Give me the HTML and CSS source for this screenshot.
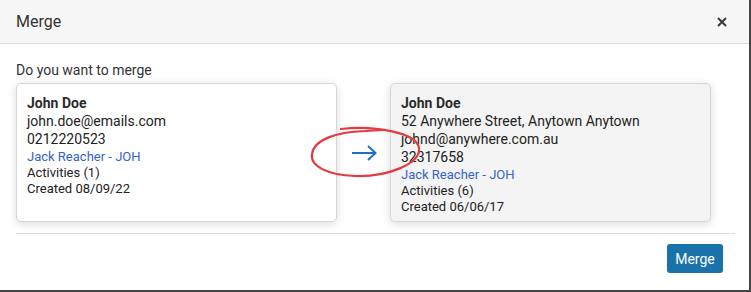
FILE: index.html
```html
<!DOCTYPE html>
<html lang="en">
<head>
  <meta charset="UTF-8" />
  <title>Merge</title>
  <meta name="viewport" content="width=device-width, initial-scale=1.0" />
  <link rel="stylesheet" href="styles.css">
</head>
<body>

  <div class="dialog">
    <div class="dialog-header">
      <h3>Merge</h3>
      <button class="btn-close" aria-label="Close">
        <svg width="10" height="10" viewBox="0 0 10 10">
          <path d="M1 1 L9 9 M9 1 L1 9" stroke="#3a3a3a" stroke-width="2" />
        </svg>
      </button>
    </div>

    <div class="dialog-body">
      <p class="question">Do you want to merge</p>

      <div class="merge-row">
        <div class="card">
          <div class="name">John Doe</div>
          <div class="big">john.doe@emails.com</div>
          <div class="big">0212220523</div>
          <div class="link">Jack Reacher - JOH</div>
          <div class="small">Activities (1)</div>
          <div class="small">Created 08/09/22</div>
        </div>

        <div class="arrow">
          <svg width="26" height="16" viewBox="0 0 26 16">
            <path d="M1 8 H24.5 M17 1 L24.5 8 L17 15" fill="none" stroke="#1f6fc8" stroke-width="2" />
          </svg>
        </div>

        <div class="card card-target">
          <div class="name">John Doe</div>
          <div class="big">52 Anywhere Street, Anytown Anytown</div>
          <div class="big">johnd@anywhere.com.au</div>
          <div class="big">32317658</div>
          <div class="link">Jack Reacher - JOH</div>
          <div class="small">Activities (6)</div>
          <div class="small">Created 06/06/17</div>
        </div>
      </div>
    </div>

    <div class="dialog-footer">
      <button class="btn-merge">Merge</button>
    </div>

    <!-- hand drawn annotation around the arrow -->
    <svg class="scribble" width="120" height="60" viewBox="0 0 120 60">
      <path d="M36 7 C70 3, 112 11, 114 26 C116 42, 82 55, 50 54 C22 53, 5 44, 7 32 C9 18, 30 10, 60 9 L 78 8"
            fill="none" stroke="#e33b3f" stroke-width="2.2" stroke-linecap="round" />
    </svg>
  </div>

</body>
</html>
```

FILE: styles.css
```css
:root {
  --primary-color: #1a72aa;
  --link-color: #3464c6;
  --text-color: #222;
}

body {
  margin: 0;
  font-family: Roboto, 'Liberation Sans', sans-serif;
  background: #fff;
  color: var(--text-color);
}

.dialog {
  position: relative;
  width: 749px;
  height: 290px;
  background: #fff;
  border-right: 2px solid #454545;
  border-bottom: 2px solid #454545;
}

.dialog-header {
  height: 43px;
  background: #f7f7f7;
  border-bottom: 1px solid #dcdcdc;
  display: flex;
  align-items: center;
  justify-content: space-between;
  padding: 0 16px;
}

.dialog-header h3 {
  margin: 0;
  font-size: 16px;
  font-weight: 400;
  color: #333;
}

.btn-close {
  background: transparent;
  border: none;
  padding: 0;
  margin-right: 6px;
  display: flex;
  cursor: pointer;
}

.dialog-body {
  padding: 16px 14px 0 16px;
}

.question {
  margin: 0 0 3px;
  font-size: 14px;
  line-height: 20px;
  color: #333;
}

.merge-row {
  display: flex;
  align-items: center;
  padding-bottom: 11px;
  border-bottom: 1px solid #dedede;
}

.card {
  width: 321px;
  height: 139px;
  box-sizing: border-box;
  padding: 10px 10px;
  background: #fff;
  border: 1px solid #d6d6d6;
  border-radius: 5px;
  box-shadow: 0 2px 8px rgba(0, 0, 0, 0.14);
}

.card-target {
  background: #f4f4f4;
}

.name {
  font-size: 14px;
  font-weight: 700;
  line-height: 18px;
  color: #2b2b2b;
}

.big {
  font-size: 14px;
  line-height: 18px;
}

.link {
  font-size: 13px;
  line-height: 17px;
  color: var(--link-color);
}

.small {
  font-size: 13px;
  line-height: 16px;
}

.arrow {
  width: 53px;
  display: flex;
  justify-content: center;
}

.dialog-footer {
  display: flex;
  justify-content: flex-end;
  padding: 10px 26px 0 16px;
}

.btn-merge {
  background: var(--primary-color);
  color: #fff;
  border: none;
  border-radius: 3px;
  width: 56px;
  height: 29px;
  font-family: inherit;
  font-size: 14px;
  cursor: pointer;
}

.scribble {
  position: absolute;
  left: 305px;
  top: 122px;
}
```
